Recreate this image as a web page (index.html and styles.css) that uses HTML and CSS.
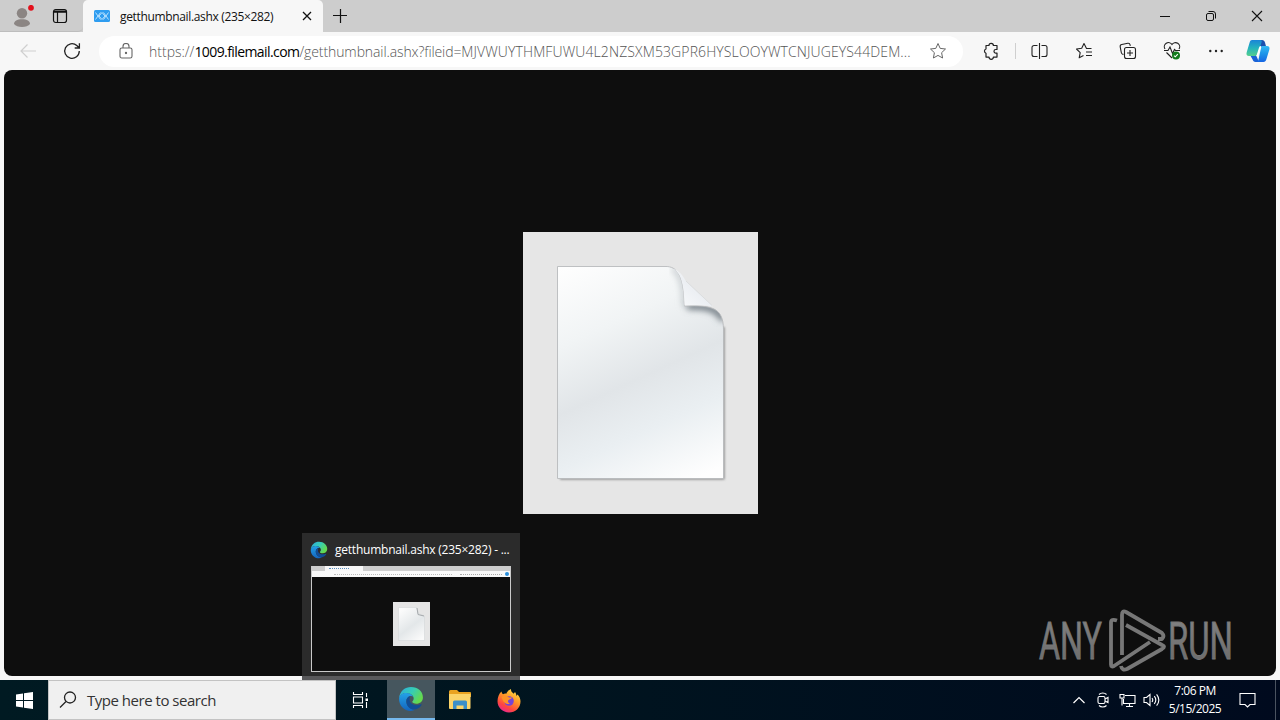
FILE: index.html
```html
<!DOCTYPE html>
<html lang="en">
<head>
    <meta charset="UTF-8">
    <meta name="viewport" content="width=device-width, initial-scale=1.0">
    <title>getthumbnail.ashx (235×282)</title>
    <link rel="stylesheet" href="styles.css">
</head>
<body>
    <!-- Tab strip -->
    <div class="tabstrip">
        <div class="strip-left">
            <svg class="profile" width="24" height="24" viewBox="0 0 24 24">
                <circle cx="12" cy="8.300" r="5.200" fill="#8b8583"/>
                <path d="M4 19c0-3 3-4.700 8-4.700s8 1.700 8 4.700c-1.500 2-4.500 3-8 3s-6.500-1-8-3z" fill="#8b8583"/>
                <circle cx="21" cy="2.800" r="2.900" fill="#e3101b"/>
            </svg>
            <svg width="16" height="16" viewBox="0 0 16 16" fill="none" stroke="#111" stroke-width="1.200">
                <rect x="1.500" y="1.500" width="13" height="13" rx="2.200"/>
                <path d="M2 3.200h12M2 4.200h12M5.500 4v10.500"/>
            </svg>
        </div>
        <div class="tab">
            <svg width="16" height="12" viewBox="0 0 16 12">
                <rect width="16" height="12" rx="1.500" fill="#2f9df0"/>
                <path d="M1.500 2.500l5 7M6.500 2.500l-5 7M5 6l3-3.500 3 3.500-3 3.500zM9.500 2.500l5 7M14.500 2.500l-5 7" stroke="#b8e1ff" fill="none"/>
            </svg>
            <span class="tab-title">getthumbnail.ashx (235×282)</span>
            <svg class="tab-close" width="10" height="10" viewBox="0 0 10 10" stroke="#111" stroke-width="1.300"><path d="M1 1l8 8M9 1L1 9"/></svg>
        </div>
        <svg class="new-tab" width="14" height="14" viewBox="0 0 14 14" stroke="#111" stroke-width="1.200"><path d="M0 6.500h14M7.500 0v14"/></svg>
        <div class="window-buttons">
            <svg width="12" height="12" viewBox="0 0 12 12" stroke="#111"><path d="M1 6.500h10"/></svg>
            <svg width="12" height="12" viewBox="0 0 12 12" stroke="#111" fill="none"><rect x="1.500" y="3.500" width="7" height="7" rx="1.500"/><path d="M3.500 1.500h4.500a2.500 2.500 0 0 1 2.500 2.500v4.500"/></svg>
            <svg width="12" height="12" viewBox="0 0 12 12" stroke="#111" stroke-width="1.100"><path d="M1 1l10 10M11 1L1 11"/></svg>
        </div>
    </div>

    <!-- Toolbar -->
    <div class="toolbar">
        <div class="tool"><svg width="18" height="16" viewBox="0 0 18 16" fill="none" stroke="#cfcfcf" stroke-width="1.200"><path d="M17 8H2M8.500 1.500L2 8l6.500 6.500"/></svg></div>
        <div class="tool"><svg width="18" height="18" viewBox="0 0 18 18" fill="none" stroke="#222" stroke-width="1.300"><path d="M16.300 9a7.300 7.300 0 1 1-2.500-5.500l2.200 2.300M16.400 1.300v4.700h-4.700"/></svg></div>
        <div class="address">
            <svg class="lock" width="14" height="16" viewBox="0 0 14 16" fill="none" stroke="#666" stroke-width="1.100"><rect x="1" y="5" width="12" height="10" rx="1.800"/><path d="M4 5V3.500a3 3 0 0 1 6 0V5"/><circle cx="7" cy="10" r="0.600" fill="#666"/></svg>
            <div class="url"><span class="url-scheme">https://</span><span class="url-host">1009.filemail.com</span><span class="url-path">/getthumbnail.ashx?fileid=</span><span class="url-id">MJVWUYTHMFUWU4L2NZSXM53GPR6HYSLOOYWTCNJUGEYS44DEM...</span></div>
            <svg class="star" width="18" height="18" viewBox="0 0 18 18" fill="none" stroke="#666" stroke-linejoin="round"><path d="M9 1.500l2.200 4.900 5.300.600-3.900 3.700 1 5.300L9 13.400 4.400 16l1-5.300L1.500 7l5.300-.600z"/></svg>
        </div>
        <div class="tool"><svg width="18" height="18" viewBox="0 0 18 18" fill="none" stroke="#222" stroke-width="1.200" stroke-linejoin="round"><path d="M4 3.500h3a2.200 2.200 0 0 1 4.400 0H15v4h-1.200a1.800 1.800 0 0 0 0 3.600H15v4h-3.600a2.200 2.200 0 0 1-4.400 0H4v-3.900a2.200 2.200 0 0 1 0-4.200z"/></svg></div>
        <div class="divider"></div>
        <div class="tool"><svg width="18" height="18" viewBox="0 0 18 18" fill="none" stroke="#222" stroke-width="1.100"><path d="M8.500 1v16M6.500 3.500H3a2 2 0 0 0-2 2v7a2 2 0 0 0 2 2h3.500M10.500 3.500H14a2 2 0 0 1 2 2v7a2 2 0 0 1-2 2h-3.500"/></svg></div>
        <div class="tool"><svg width="18" height="18" viewBox="0 0 18 18" fill="none" stroke="#222" stroke-width="1.100" stroke-linejoin="round"><path d="M16.500 6.500h-5L9 1.500 6.700 6.200l-5.200.800L5.200 10.600l-1 5.200 4.300-2.300M11 10h6M11 13.500h6"/></svg></div>
        <div class="tool"><svg width="18" height="18" viewBox="0 0 18 18" fill="none" stroke="#222" stroke-width="1.100"><path d="M4.500 12.500l-1.200-.500a2 2 0 0 1-1-1.500L1.200 4.800a2 2 0 0 1 1.600-2.300l6-1.200a2 2 0 0 1 2.300 1.500l.2 1"/><rect x="5.500" y="5.500" width="11" height="11" rx="2"/><path d="M11 8v6M8 11h6"/></svg></div>
        <div class="tool"><svg width="18" height="18" viewBox="0 0 18 18" fill="none" stroke="#222" stroke-width="1.100"><path d="M2 7a4 4 0 0 1 7-4.500A4 4 0 0 1 16 7M1 8.500h4l2-3.500 2.500 6.500 2-4 1 1H17M3.500 10.500L9 16"/><circle cx="13" cy="13.500" r="4" fill="#117b1c" stroke="none"/><path d="M11 13.600l1.300 1.200 2.500-2.600" stroke="#fff"/></svg></div>
        <div class="tool"><svg width="18" height="18" viewBox="0 0 18 18" fill="#222"><circle cx="3.300" cy="9" r="1.200"/><circle cx="9" cy="9" r="1.200"/><circle cx="14.700" cy="9" r="1.200"/></svg></div>
        <div class="tool copilot">
            <svg width="24" height="24" viewBox="0 0 24 24">
                <defs>
                    <linearGradient id="cop-a" x1="0" y1="0" x2="0" y2="1"><stop offset="0" stop-color="#1a84d8"/><stop offset=".5" stop-color="#24b3bd"/><stop offset="1" stop-color="#55cf8c"/></linearGradient>
                    <linearGradient id="cop-b" x1="0" y1="0" x2="0" y2="1"><stop offset="0" stop-color="#31b9f5"/><stop offset=".5" stop-color="#1c93e8"/><stop offset="1" stop-color="#1665e4"/></linearGradient>
                </defs>
                <path d="M11 1h5c1.700 0 2.500 1 3 2.500L20.200 8h-6z" fill="#1a4fae"/>
                <path d="M4 16h6l3 7H9.500c-1.700 0-2.400-1-2.900-2.500z" fill="#1a62d6"/>
                <path d="M6 1h8.500c1.300 0 1.500.800 1.100 2.200l-3.800 11c-.5 1.800-1.400 2.800-3.200 2.800H3C.8 17 0 15.300.7 13.200L3.700 3.300C4.200 1.800 4.800 1 6 1z" fill="url(#cop-a)"/>
                <path d="M15.500 7H21c2.200 0 3 1.700 2.300 3.800l-3 9.700c-.5 1.500-1.300 2.500-2.800 2.500h-7c1 0 1.500-.8 1.900-2.200L15.500 7z" fill="url(#cop-b)"/>
                <path d="M14.700 7c-.900.100-1.400.8-1.800 2l-2.600 8.200c1.300-.2 2-.9 2.500-2.500L15.300 7z" fill="#fff"/>
            </svg>
        </div>
    </div>

    <!-- Page content -->
    <div class="viewport">
        <div class="image">
            <svg width="235" height="282" viewBox="0 0 235 282">
                <defs>
                    <linearGradient id="paper" gradientUnits="userSpaceOnUse" x1="66" y1="24" x2="172" y2="255">
                        <stop offset="0" stop-color="#fefefe"/><stop offset=".28" stop-color="#f1f4f5"/><stop offset=".52" stop-color="#e1e5e8"/><stop offset=".72" stop-color="#eaeff2"/><stop offset=".97" stop-color="#fefefe"/>
                    </linearGradient>
                    <linearGradient id="curl" gradientUnits="userSpaceOnUse" x1="160" y1="72" x2="180" y2="50"><stop offset="0" stop-color="#f5f7f9"/><stop offset=".6" stop-color="#eceff3"/><stop offset="1" stop-color="#f8f9fa"/></linearGradient>
                    <clipPath id="sheet"><path d="M34.500 34.500H143c10 0 18 7 18.500 39.500C190 73 200 76 200.500 97v149.500h-166z"/></clipPath>
                    <filter id="soft" x="-30%" y="-50%" width="160%" height="200%"><feGaussianBlur stdDeviation="3"/></filter>
                    <filter id="drop" x="-5%" y="-5%" width="110%" height="110%"><feGaussianBlur stdDeviation="1"/></filter>
                </defs>
                <rect x="37" y="95" width="164.500" height="152.500" fill="#858585" filter="url(#drop)"/>
                <path d="M34.500 34.500H143c10 0 18 7 18.500 39.500C190 73 200 76 200.500 97v149.500h-166z" fill="url(#paper)"/>
                <g clip-path="url(#sheet)">
                    <path d="M150 36c8 8 11 15 11.500 38" fill="none" stroke="#bcc2c6" stroke-width="4" filter="url(#soft)"/>
                    <path d="M164 74c20 0 30 2 37 14" fill="none" stroke="#727b83" stroke-width="7" filter="url(#soft)"/>
                </g>
                <path d="M143 34.500c10 0 18 7 18.500 39.500C190 73 200 76 200.500 97v149.500h-166v-212z" fill="none" stroke="#b8babc" stroke-width=".9"/>
                <path d="M150 36.500c6 2 10 7 13 13l27 25c-7-1.500-16-1.500-28.500-1C161 52 158 41 150 36.500z" fill="url(#curl)"/>
                <path d="M163 49l26 24.500" stroke="#d8dadc" stroke-width=".8"/>
            </svg>
        </div>
        <svg class="watermark" width="204" height="66" viewBox="0 0 204 66">
            <defs><linearGradient id="wm" x1="0" y1="0" x2="0" y2="1"><stop offset="0" stop-color="#858585"/><stop offset="1" stop-color="#686868"/></linearGradient></defs>
            <text x="7" y="51.500" textLength="63" lengthAdjust="spacingAndGlyphs" class="wm-text">ANY</text>
            <text x="136" y="51.500" textLength="65" lengthAdjust="spacingAndGlyphs" class="wm-text">RUN</text>
            <g fill="none" stroke="#777" stroke-width="3.800" stroke-linejoin="round" stroke-linecap="butt">
                <path d="M85 13.500q-6-2-6 2v42q0 3 3 1.500L118 35"/>
                <path d="M90 48V8q0-5 4-3l36 21q3 3 0 6l-4 0"/>
                <path d="M94 18l36 20q4 1.500 0 4L95 62q-5 2-6-3"/>
            </g>
        </svg>
    </div>

    <!-- Taskbar -->
    <div class="taskbar">
        <div class="start"><svg width="17" height="17" viewBox="0 0 17 17" fill="#fff"><path d="M0 2.400l7-1v6.600H0zM8 1.200L17 0v8H8zM0 9h7v6.500l-7-1zM8 9h9v8l-9-1.300z"/></svg></div>
        <div class="search">
            <svg width="18" height="18" viewBox="0 0 18 18" fill="none" stroke="#222" stroke-width="1.300"><circle cx="11" cy="6.500" r="5.500"/><path d="M7 10.500L1 16.500"/></svg>
            <span>Type here to search</span>
        </div>
        <div class="task-view"><svg width="17" height="16" viewBox="0 0 17 16" fill="none" stroke="#fff" stroke-width="1.100"><path d="M1.500 0v2.500h9V0M1.500 16v-2.500h9V16M1.500 5h9v6h-9zM14.500 1v4M14.500 10v6"/><rect x="13.500" y="6.500" width="2.500" height="2.500" fill="#fff" stroke="none"/></svg></div>
        <div class="app app-active">
            <svg width="26" height="26" viewBox="0 0 24 24">
                <defs>
                    <linearGradient id="edge-a" x1="0" y1="0" x2="1" y2=".5"><stop offset="0" stop-color="#2ca8e0"/><stop offset=".55" stop-color="#36cdb5"/><stop offset="1" stop-color="#65d94d"/></linearGradient>
                    <linearGradient id="edge-b" x1="0" y1="0" x2="0" y2="1"><stop offset="0" stop-color="#23a2e8"/><stop offset="1" stop-color="#1464bd"/></linearGradient>
                </defs>
                <g id="edge">
                    <path d="M1 11C2 4.500 6.500 1 12 1c6.500 0 11 4.400 11 9.500 0 3.700-2.900 5.800-6 5.800-2.300 0-3.800-.800-3.800-1.700 0-.700 1.300-1.100 1.300-3.100C14.500 8.500 11 6.500 7.500 6.500 4.500 6.500 2.200 8 1 11z" fill="url(#edge-a)"/>
                    <path d="M1 11.500C1.500 8 4.500 6.500 7.500 6.500c3.200 0 5.600 1.500 6.500 3.300-1-.7-2-.8-2.800-.5C8.700 10 7.700 12 7.700 14c0 4.500 4 8 8.300 7.800-1.200.800-2.700 1.200-4.200 1.200C5.500 23 .700 17.700 1 11.500z" fill="url(#edge-b)"/>
                    <path d="M11.200 9.300C8.800 10.300 7.700 12 7.700 14c0 5.500 5 9 9.500 7.300 2-.800 3.500-2.200 4.500-3.800.3-.5-.1-.8-.6-.6-4.300 2-10.400.300-10.400-4.400 0-1.300.300-2.300.5-3.200z" fill="#114d96"/>
                </g>
            </svg>
        </div>
        <div class="app"><svg width="24" height="22" viewBox="0 0 24 22">
            <path d="M1 2.500Q1 1 2.500 1H9l2 2h11q1 0 1 1v4H1z" fill="#e9a321"/>
            <path d="M1 5h21.500v14q0 1-1 1H2q-1 0-1-1z" fill="#fbd469"/>
            <path d="M5 20v-7q0-1.500 1.500-1.500h11Q19 11.500 19 13v7h-3.500v-3.500h-7V20z" fill="#3b8fc8"/>
        </svg></div>
        <div class="app"><svg width="24" height="25" viewBox="0 0 24 25">
            <defs><linearGradient id="fox" x1=".8" y1="0" x2=".25" y2="1"><stop offset="0" stop-color="#ffe34a"/><stop offset=".4" stop-color="#ff9a28"/><stop offset=".75" stop-color="#ff463e"/><stop offset="1" stop-color="#e7229a"/></linearGradient></defs>
            <path d="M4.500 3.500c.3 1.500.8 2 1.500 2.700 1-.5 2-.7 3.300-.5C10 3.800 11.500 2 14 1c-.2 2.500 1.200 3.300 2.700 4.700L18 4c1 1.300 1.300 2.500 1.500 4l1-1.500C22.500 8.500 23.500 11 23.500 13.500 23.500 20 18.300 24.500 12 24.500S.500 19.700.500 13.300C.5 9.500 2 5.500 4.500 3.500z" fill="url(#fox)"/>
            <circle cx="12" cy="13" r="4.800" fill="#7544d8"/>
            <path d="M4.500 9c3-2 5.500-1.500 7.500.5h3c-.5 1.500-2.500 1.500-3.500 2.500s-.5 3 1.500 3.500c-3 2-7-1-8.500-6.500z" fill="#ff9426"/>
        </svg></div>
        <div class="tray">
            <div class="tray-icon"><svg width="12" height="8" viewBox="0 0 12 8" fill="none" stroke="#fff" stroke-width="1.200"><path d="M.5 7L6 1.500 11.500 7"/></svg></div>
            <div class="tray-icon"><svg width="14" height="16" viewBox="0 0 14 16" fill="none" stroke="#fff" stroke-width="1.100"><rect x="2" y="4.500" width="7" height="7" rx="1.500"/><path d="M9 7l3-1.500v5L9 9M3 2.500C5 .5 8.500.5 10.500 2.500M3 13.500c2 2 5.500 2 7.500 0"/></svg></div>
            <div class="tray-icon"><svg width="17" height="15" viewBox="0 0 17 15" fill="none" stroke="#fff" stroke-width="1.100"><path d="M6 2.500h10v8H4.500V6M7 13.500h7M10.500 10.500v3M1 1.500h4v3.500H1zM3 5v7.500"/></svg></div>
            <div class="tray-icon"><svg width="17" height="14" viewBox="0 0 17 14" fill="none" stroke="#fff" stroke-width="1.100"><path d="M1 4.500h2.500L7 1.500v11L3.500 9.500H1zM9 5q1.500 2 0 4M11.300 3.200q3 3.800 0 7.600M13.600 1.300q4.500 5.700 0 11.400"/></svg></div>
            <div class="clock"><span class="time">7:06 PM</span><span class="date">5/15/2025</span></div>
            <div class="notice"><svg width="17" height="17" viewBox="0 0 17 17" fill="none" stroke="#fff" stroke-width="1.100"><path d="M1 1.500h15v11h-5L8.500 15 6 12.500H1z"/></svg></div>
            <div class="show-desktop"></div>
        </div>
    </div>

    <!-- Taskbar hover preview -->
    <div class="preview">
        <div class="preview-head">
            <svg width="18" height="18" viewBox="0 0 24 24"><use href="#edge"/></svg>
            <span>getthumbnail.ashx (235×282) - ...</span>
        </div>
        <div class="mini">
            <div class="mini-strip"><i class="mini-tab"></i></div>
            <div class="mini-bar"><i class="mini-url"></i><i class="mini-tools"></i><i class="mini-copilot"></i></div>
            <div class="mini-page">
                <svg width="37" height="44" viewBox="0 0 37 44"><rect width="37" height="44" fill="#e5e5e5"/><path d="M5.500 5.500h18l2 6 6 2.500v24.500h-26z" fill="url(#mini-paper)" stroke="#d4d7d9" stroke-width=".6"/><path d="M24 6l1 6.500 6 1.500" fill="none" stroke="#a5a9ac"/><defs><linearGradient id="mini-paper" x1=".2" y1="0" x2=".8" y2="1"><stop offset="0" stop-color="#fcfcfc"/><stop offset=".55" stop-color="#e3e7e9"/><stop offset="1" stop-color="#fafafa"/></linearGradient></defs></svg>
            </div>
        </div>
    </div>
</body>
</html>
```
FILE: styles.css
```css
* {
    box-sizing: border-box;
}
body {
    margin: 0;
    width: 1280px;
    height: 720px;
    position: relative;
    display: flex;
    flex-direction: column;
    overflow: hidden;
    background: #f7f7f7;
    font-family: "Open Sans", "Noto Sans", sans-serif;
    color: #111;
    white-space: nowrap;
}
svg {
    display: block;
    flex: none;
}

/* Tab strip */
.tabstrip {
    height: 32px;
    display: flex;
    background: #cdcdcd;
}
.strip-left {
    width: 83px;
    display: flex;
    align-items: center;
    gap: 18px;
    padding-left: 10px;
    border-bottom: 1px solid #bdbdbd;
    border-radius: 0 0 5px 0;
}
.profile {
    margin-top: 3px;
}
.tab {
    width: 240px;
    display: flex;
    align-items: center;
    padding: 0 11px;
    background: #f7f7f7;
    border-radius: 5px 5px 0 0;
}
.tab-title {
    margin-left: 10px;
    font-size: 12px;
    letter-spacing: -0.34px;
}
.tab-close {
    margin-left: auto;
}
.new-tab {
    margin: 9px 0 0 10px;
}
.window-buttons {
    flex: 1;
    display: flex;
    justify-content: flex-end;
    align-items: center;
    gap: 34px;
    padding-right: 17px;
}

/* Toolbar */
.toolbar {
    height: 38px;
    display: flex;
    align-items: center;
    padding-left: 6px;
    background: #f7f7f7;
}
.tool {
    width: 44px;
    display: flex;
    justify-content: center;
}
.copilot {
    width: 40px;
}
.divider {
    width: 1px;
    height: 16px;
    margin: 0 2px;
    background: #cfcfcf;
}
.address {
    width: 864px;
    height: 31px;
    margin: 0 6px 0 5px;
    padding: 0 16px 0 20px;
    display: flex;
    align-items: center;
    background: #fff;
    border-radius: 16px;
}
.url {
    width: 764px;
    margin-left: 16px;
    display: flex;
    font-size: 14px;
    color: #555;
    font-weight: 300;
}
.url-host {
    color: #000;
    font-weight: 400;
    letter-spacing: -0.58px;
}
.url-path {
    letter-spacing: -0.1px;
}
.url-id {
    letter-spacing: 0.11px;
}
.star {
    margin-left: auto;
}

/* Page content */
.viewport {
    height: 606px;
    margin: 0 4px 4px;
    position: relative;
    display: flex;
    justify-content: center;
    align-items: center;
    background: #0e0e0e;
    border-radius: 8px;
}
.image {
    background: #e6e6e6;
    margin-left: 1px;
}
.watermark {
    position: absolute;
    right: 40px;
    bottom: 3px;
}
.wm-text {
    font-family: Roboto, sans-serif;
    font-size: 51px;
    fill: url(#wm);
    stroke: #777;
    stroke-width: 0.8px;
}

/* Taskbar */
.taskbar {
    height: 40px;
    display: flex;
    background: linear-gradient(90deg, #001a22, #00141f 45%, #000a1e);
    color: #fff;
}
.start, .task-view, .app {
    width: 48px;
    display: flex;
    align-items: center;
    justify-content: center;
}
.search {
    width: 288px;
    display: flex;
    align-items: center;
    gap: 10px;
    padding-left: 10px;
    background: #f0f0f0;
    border: 1px solid #c3c3c3;
    color: #333;
    font-size: 15px;
    letter-spacing: -0.48px;
}
.task-view {
    margin-right: 3px;
}
.app {
    margin-left: 1px;
}
.app-active {
    margin-left: 0;
    background: #46565e;
    border-bottom: 2px solid #76b9ed;
}
.tray {
    margin-left: auto;
    display: flex;
    align-items: center;
}
.tray-icon {
    width: 24px;
    display: flex;
    justify-content: center;
}
.clock {
    width: 64px;
    display: flex;
    flex-direction: column;
    align-items: center;
    font-size: 12px;
    line-height: 18px;
}
.time {
    letter-spacing: -0.5px;
}
.date {
    letter-spacing: -0.5px;
}
.notice {
    width: 40px;
    display: flex;
    justify-content: center;
}
.show-desktop {
    width: 5px;
    height: 40px;
    margin-left: 8px;
    border-left: 1px solid #4a5360;
}

/* Taskbar hover preview */
.preview {
    position: absolute;
    left: 302px;
    top: 533px;
    width: 218px;
    height: 147px;
    padding: 0 8px 0 9px;
    background: #2b2b2b;
    border-bottom: 4px solid #58585a;
    color: #fff;
}
.preview-head {
    height: 33px;
    margin-left: -1px;
    display: flex;
    align-items: center;
    gap: 7px;
    font-size: 12px;
    letter-spacing: -0.23px;
}
.mini {
    width: 200px;
    height: 106px;
    border: 1px solid #c9c9c9;
    border-top: 0;
    display: flex;
    flex-direction: column;
    background: #0e0e0e;
}
.mini-strip {
    height: 5px;
    background: #cdcdcd;
}
.mini-tab {
    display: block;
    width: 38px;
    height: 5px;
    margin-left: 13px;
    padding: 2px 0 0 14px;
    background: #f7f7f7;
    border-left: 0;
}
.mini-tab::before {
    content: "";
    display: block;
    width: 20px;
    margin-left: -10px;
    border-top: 1px dotted #5b8fc0;
}
.mini-bar {
    height: 6px;
    display: flex;
    align-items: center;
    padding: 0 1px 0 22px;
    background: #f9f9f9;
}
.mini-url {
    width: 118px;
    border-top: 1px dotted #bbb;
}
.mini-tools {
    width: 42px;
    margin-left: 8px;
    border-top: 1px dotted #aaa;
}
.mini-copilot {
    width: 4px;
    height: 4px;
    margin-left: auto;
    background: #2a8fdc;
    border-radius: 2px;
}
.mini-page {
    flex: 1;
    display: flex;
    justify-content: center;
    align-items: center;
}
```
